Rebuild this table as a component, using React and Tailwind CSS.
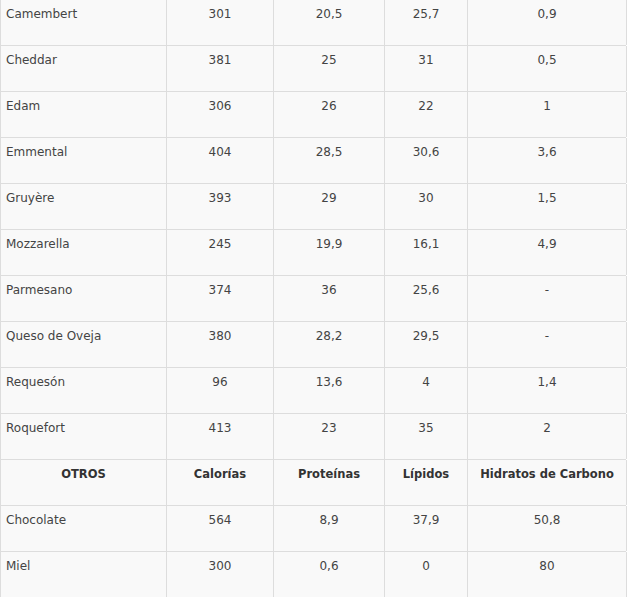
import React from 'react';

const rows = [
    ['Camembert', '301', '20,5', '25,7', '0,9'],
    ['Cheddar', '381', '25', '31', '0,5'],
    ['Edam', '306', '26', '22', '1'],
    ['Emmental', '404', '28,5', '30,6', '3,6'],
    ['Gruyère', '393', '29', '30', '1,5'],
    ['Mozzarella', '245', '19,9', '16,1', '4,9'],
    ['Parmesano', '374', '36', '25,6', '-'],
    ['Queso de Oveja', '380', '28,2', '29,5', '-'],
    ['Requesón', '96', '13,6', '4', '1,4'],
    ['Roquefort', '413', '23', '35', '2'],
    { head: true, cells: ['OTROS', 'Calorías', 'Proteínas', 'Lípidos', 'Hidratos de Carbono'] },
    ['Chocolate', '564', '8,9', '37,9', '50,8'],
    ['Miel', '300', '0,6', '0', '80'],
];

function Row({ cells, head }) {
    return (
        <div className="grid grid-cols-[166px_107px_111px_83px_159px] border-b border-[#dddddd]">
            {cells.map((c, i) => (
                <div
                    key={i}
                    className={
                        'h-[45px] pt-[5px] leading-[18px] border-r border-[#dddddd] ' +
                        (i === 0 && !head ? 'text-left pl-[5px] ' : 'text-center ') +
                        (head ? 'font-bold text-[11.5px] text-[#333333]' : 'text-[#444444]')
                    }
                >
                    {c}
                </div>
            ))}
        </div>
    );
}

export default function App() {
    return (
        <div className="min-h-screen bg-white" style={{ fontFamily: '"DejaVu Sans", Verdana, sans-serif' }}>
            <div className="w-[626px] bg-[#f9f9f9] border-l border-[#dddddd] text-[12px]">
                {rows.map((r, i) =>
                    Array.isArray(r) ? <Row key={i} cells={r} /> : <Row key={i} cells={r.cells} head />
                )}
            </div>
        </div>
    );
}
